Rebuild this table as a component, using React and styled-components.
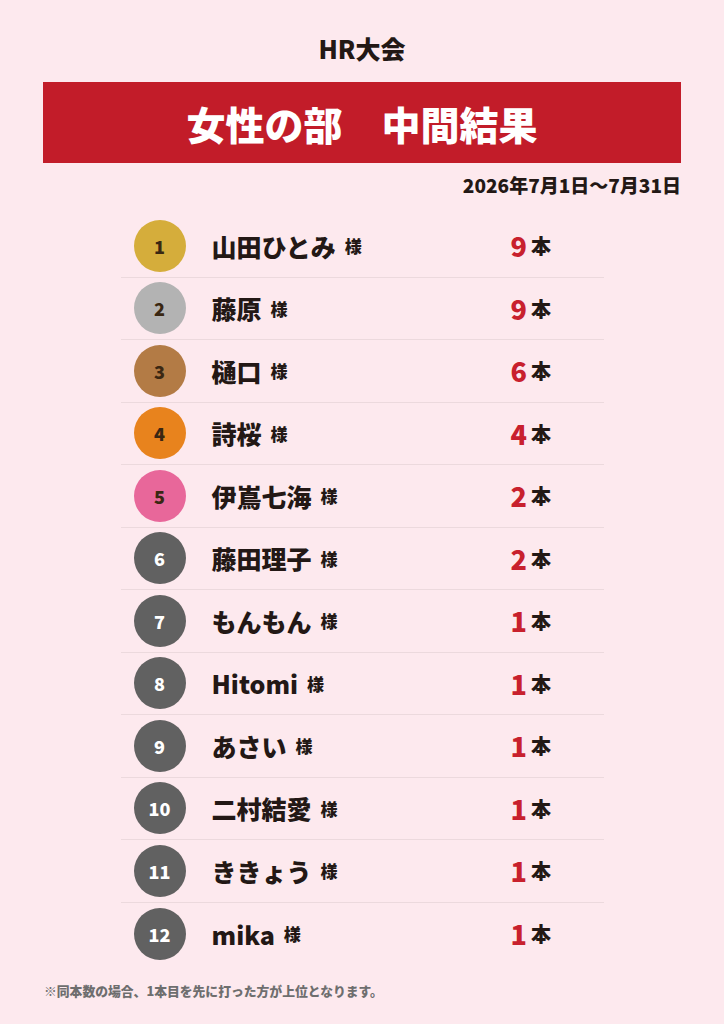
import React from 'react'
import styled, { createGlobalStyle } from 'styled-components'

const players = [
  { rank: 1, name: '山田ひとみ', count: 9 },
  { rank: 2, name: '藤原', count: 9 },
  { rank: 3, name: '樋口', count: 6 },
  { rank: 4, name: '詩桜', count: 4 },
  { rank: 5, name: '伊嶌七海', count: 2 },
  { rank: 6, name: '藤田理子', count: 2 },
  { rank: 7, name: 'もんもん', count: 1 },
  { rank: 8, name: 'Hitomi', count: 1 },
  { rank: 9, name: 'あさい', count: 1 },
  { rank: 10, name: '二村結愛', count: 1 },
  { rank: 11, name: 'ききょう', count: 1 },
  { rank: 12, name: 'mika', count: 1 },
]

const medalColors = {
  1: '#d5ad3b',
  2: '#b3b3b3',
  3: '#b37b45',
  4: '#e8831d',
  5: '#e8679a',
}

const GlobalStyle = createGlobalStyle`
  body {
    margin: 0;
    background: #fde9ee;
    font-family: "Noto Sans CJK JP", "Noto Sans", sans-serif;
    color: #231815;
  }
`

const Page = styled.div`
  width: 724px;
  height: 1024px;
  box-sizing: border-box;
  padding: 32px 43px 0;
  display: flex;
  flex-direction: column;
`

const EventTitle = styled.h2`
  margin: 0;
  text-align: center;
  font-size: 25px;
  font-weight: 900;
  line-height: 32px;
`

const Banner = styled.div`
  margin-top: 18px;
  height: 81px;
  background: #c21c29;
  color: #fff;
  display: flex;
  align-items: center;
  justify-content: center;
  font-size: 39px;
  font-weight: 900;
`

const Period = styled.div`
  margin-top: 11px;
  text-align: right;
  font-size: 19px;
  font-weight: 900;
  line-height: 22px;
`

const List = styled.ul`
  list-style: none;
  margin: 19px auto 0;
  padding: 0;
  width: 483px;
`

const Row = styled.li`
  box-sizing: border-box;
  height: 62.5px;
  padding-left: 13px;
  display: flex;
  align-items: center;
  border-bottom: 1px solid #ecd9dd;

  &:last-child {
    border-bottom: none;
  }
`

const RankBadge = styled.div`
  width: 52px;
  height: 52px;
  border-radius: 50%;
  flex-shrink: 0;
  background: ${(p) => p.$bg};
  color: ${(p) => p.$fg};
  display: flex;
  align-items: center;
  justify-content: center;
  font-size: 18px;
  font-weight: 900;
`

const Name = styled.div`
  margin-left: 26px;
  width: 299px;
  display: flex;
  align-items: center;
  font-size: 25px;
  font-weight: 900;
`

const Honorific = styled.span`
  margin-left: 9px;
  font-size: 17px;
`

const Score = styled.div`
  display: flex;
  align-items: center;
  font-weight: 900;
`

const Count = styled.span`
  color: #c8202d;
  font-size: 27px;
`

const Unit = styled.span`
  margin-left: 4px;
  font-size: 20px;
`

const Note = styled.p`
  margin: 16px 0 0 1px;
  font-size: 12.8px;
  font-weight: 900;
  color: #6e6e6e;
`

export default function App() {
  return (
    <>
      <GlobalStyle />
      <Page>
        <EventTitle>HR大会</EventTitle>
        <Banner>女性の部　中間結果</Banner>
        <Period>2026年7月1日〜7月31日</Period>
        <List>
          {players.map((p) => (
            <Row key={p.rank}>
              <RankBadge
                $bg={medalColors[p.rank] || '#616161'}
                $fg={p.rank <= 5 ? '#3a2712' : '#ffffff'}
              >
                {p.rank}
              </RankBadge>
              <Name>
                {p.name}
                <Honorific>様</Honorific>
              </Name>
              <Score>
                <Count>{p.count}</Count>
                <Unit>本</Unit>
              </Score>
            </Row>
          ))}
        </List>
        <Note>※同本数の場合、1本目を先に打った方が上位となります。</Note>
      </Page>
    </>
  )
}
